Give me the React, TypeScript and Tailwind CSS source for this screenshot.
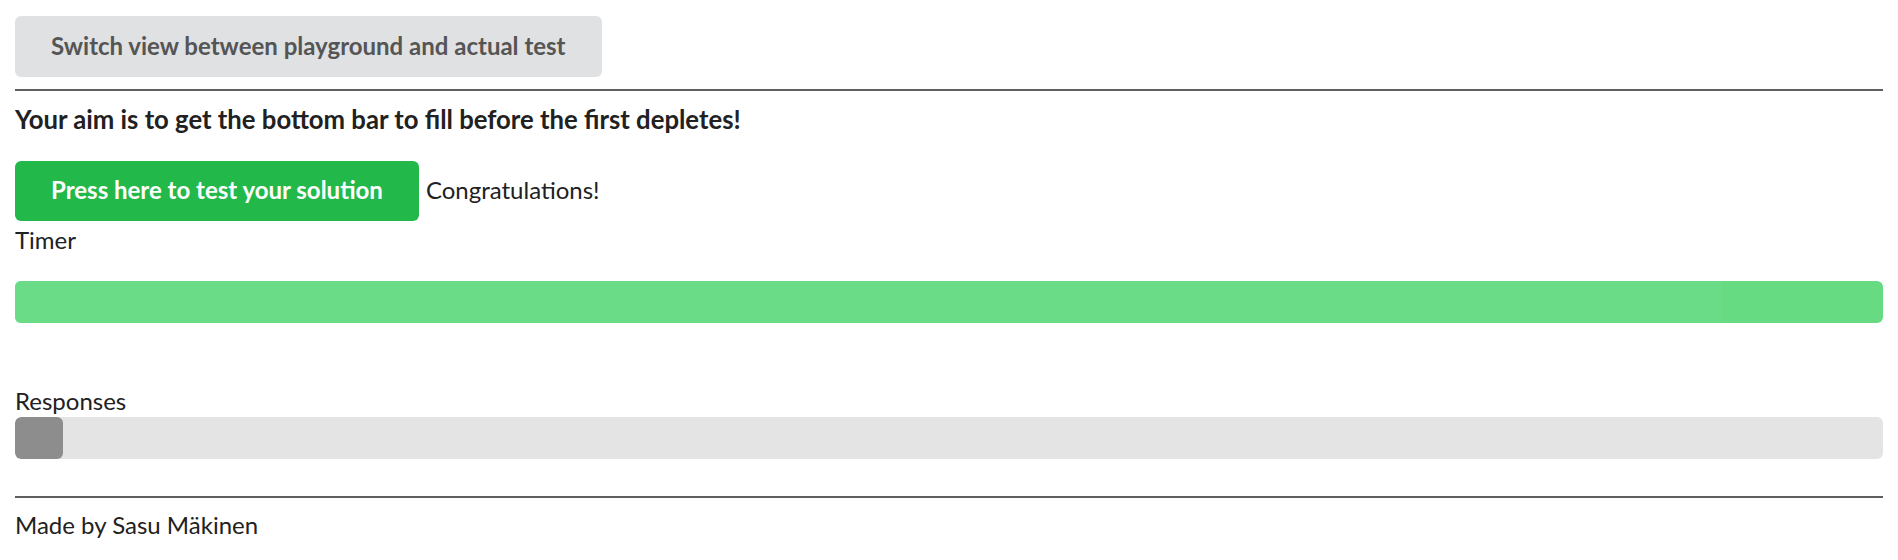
const App = () => {
  return (
    <div className="min-h-[560px] bg-white px-[15px] pt-4 font-['Lato','Liberation_Sans',sans-serif] text-[24px] leading-[1.2] text-[#212121]">
      <button className="h-[61px] rounded-md bg-[#e0e1e3] px-9 font-bold text-[#555555]">
        Switch view between playground and actual test
      </button>
      <hr className="mt-3 border-t-2 border-[#5f5f5f]" />
      <h3 className="mt-[13px] text-[25.7px] font-bold">
        Your aim is to get the bottom bar to fill before the first depletes!
      </h3>
      <div className="mt-[26px] flex items-center gap-[7px]">
        <button className="h-[60px] rounded-md bg-[#22b94a] px-9 font-bold text-white">
          Press here to test your solution
        </button>
        <span>Congratulations!</span>
      </div>
      <div className="mt-[5px]">Timer</div>
      <div className="mt-[26px] flex h-[42px] overflow-hidden rounded-md bg-[#66db82]">
        <div className="h-full w-[91.4%] bg-[#6adb86]" />
      </div>
      <div className="mt-[64px]">Responses</div>
      <div className="mt-[2px] h-[42px] overflow-hidden rounded-md bg-[#e4e4e4]">
        <div className="h-full w-[48px] rounded-md bg-[#8d8d8d]" />
      </div>
      <hr className="mt-[37px] border-t-2 border-[#5f5f5f]" />
      <footer className="mt-[13px]">Made by Sasu Mäkinen</footer>
    </div>
  );
};

export default App;
